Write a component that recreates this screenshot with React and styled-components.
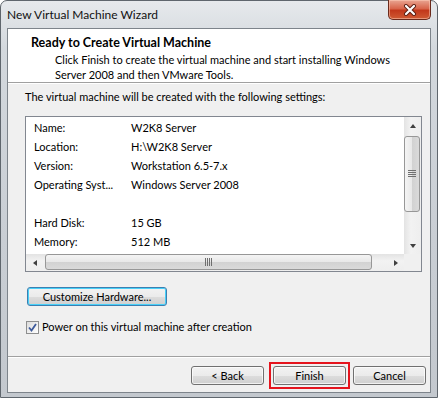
import React from "react";
import styled, { createGlobalStyle } from "styled-components";

const GlobalStyle = createGlobalStyle`
  html, body {
    margin: 0;
    padding: 0;
    background: #ffffff;
  }
  body {
    font-family: Lato, "Noto Sans", sans-serif;
    font-size: 11px;
    color: #000;
  }
`;

const settings = [
  ["Name:", "W2K8 Server"],
  ["Location:", "H:\\W2K8 Server"],
  ["Version:", "Workstation 6.5-7.x"],
  ["Operating Syst...", "Windows Server 2008"],
  null,
  ["Hard Disk:", "15 GB"],
  ["Memory:", "512 MB"],
];

const Frame = styled.div`
  width: 438px;
  height: 398px;
  box-sizing: border-box;
  display: flex;
  flex-direction: column;
  border: 1px solid #5f666d;
  border-radius: 7px 7px 0 0;
  padding: 0 6px 4px 6px;
  background: linear-gradient(180deg, #e6e9ec 0%, #d3d8dd 12%, #c9ced4 60%, #c3c8ce 100%);
`;

const TitleBar = styled.div`
  height: 27px;
  display: flex;
  align-items: flex-start;
  justify-content: space-between;
`;

const Title = styled.div`
  font-size: 12px;
  line-height: 16px;
  margin-top: 6px;
  color: #111;
`;

const CloseButton = styled.div`
  width: 43px;
  height: 20px;
  margin-top: -1px;
  box-sizing: border-box;
  border: 1px solid #6a2a1c;
  border-top: none;
  border-radius: 0 0 5px 5px;
  background: linear-gradient(180deg, #e9a592 0%, #d8654b 45%, #c2381b 55%, #cf5a33 100%);
  box-shadow: inset 0 0 0 1px rgba(255, 210, 190, 0.5);
  display: flex;
  align-items: center;
  justify-content: center;
`;

const Client = styled.div`
  flex: 1;
  display: flex;
  flex-direction: column;
  border: 1px solid #7d848b;
  background: #f0f0f0;
`;

const Header = styled.div`
  background: #ffffff;
  padding: 6px 0 0 23px;
  border-bottom: 1px solid #a0a0a0;
  box-shadow: 0 1px 0 #ffffff;
`;

const HeaderTitle = styled.div`
  font-weight: bold;
  font-size: 12.5px;
  line-height: 16px;
`;

const HeaderText = styled.div`
  margin-top: 1px;
  padding-left: 24px;
  line-height: 15px;
  width: 340px;
`;

const Body = styled.div`
  flex: 1;
  display: flex;
  flex-direction: column;
  padding: 0 9px 0 17px;
`;

const Intro = styled.div`
  margin-top: 6px;
  line-height: 16px;
`;

const ListBox = styled.div`
  margin-top: 11px;
  width: 397px;
  height: 156px;
  box-sizing: border-box;
  border: 1px solid #828790;
  background: #fff;
  display: grid;
  grid-template-columns: 1fr 17px;
  grid-template-rows: 1fr 17px;
`;

const Rows = styled.div`
  padding: 1px 0 0 8px;
  overflow: hidden;
`;

const Row = styled.div`
  display: flex;
  height: 19px;
  align-items: center;
  white-space: nowrap;
`;

const Label = styled.span`
  width: 97px;
  flex: none;
`;

const VScroll = styled.div`
  display: flex;
  flex-direction: column;
  background: linear-gradient(90deg, #e3e3e3, #f2f2f2 40%, #eeeeee);
`;

const HScroll = styled.div`
  display: flex;
  background: linear-gradient(180deg, #e3e3e3, #f2f2f2 40%, #eeeeee);
`;

const Arrow = styled.div`
  width: 17px;
  height: 17px;
  flex: none;
  display: flex;
  align-items: center;
  justify-content: center;
`;

const Track = styled.div`
  flex: 1;
  display: flex;
  flex-direction: ${(p) => (p.$vertical ? "column" : "row")};
`;

const Thumb = styled.div`
  box-sizing: border-box;
  border: 1px solid #979797;
  border-radius: 3px;
  display: flex;
  align-items: center;
  justify-content: center;
  ${(p) =>
    p.$vertical
      ? `
    margin: 2px 1px 0 0;
    width: 16px;
    height: 76px;
    background: linear-gradient(90deg, #f4f4f4 0%, #e8e8e8 50%, #d2d2d2 51%, #dadada 100%);
  `
      : `
    margin: 0 0 1px 2px;
    height: 16px;
    width: 327px;
    background: linear-gradient(180deg, #f4f4f4 0%, #e8e8e8 50%, #d2d2d2 51%, #dadada 100%);
  `}
`;

const Corner = styled.div`
  background: #f0f0f0;
`;

const Button = styled.button`
  font-family: Lato, "Noto Sans", sans-serif;
  font-size: 11px;
  color: #000;
  height: 19px;
  width: ${(p) => p.$width || 73}px;
  padding: 0;
  box-sizing: border-box;
  border: 1px solid ${(p) => (p.$focused ? "#3c7fb1" : "#707070")};
  border-radius: 3px;
  background: linear-gradient(180deg, #f2f2f2 0%, #ebebeb 50%, #dddddd 51%, #cfcfcf 100%);
  box-shadow: inset 0 0 0 1px ${(p) => (p.$focused ? "#48d0f8" : "rgba(255,255,255,0.7)")};
  line-height: 16px;
`;

const Marker = styled.span`
  display: flex;
  padding: 2px;
  margin: -4px -6px 0 -4px;
  border: 2px solid #e5141d;
`;

const CustomizeRow = styled.div`
  margin-top: 15px;
  padding-left: 2px;
`;

const CheckRow = styled.label`
  margin-top: 14px;
  display: flex;
  align-items: center;
  gap: 3px;
  padding-left: 1px;
  line-height: 14px;
`;

const Box = styled.span`
  width: 13px;
  height: 13px;
  box-sizing: border-box;
  border: 1px solid #8e8f8f;
  background: linear-gradient(135deg, #dcdcdc, #ffffff);
  display: flex;
  align-items: center;
  justify-content: center;
`;

const Separator = styled.div`
  border-top: 1px solid #a0a0a0;
  border-bottom: 1px solid #ffffff;
`;

const Footer = styled.div`
  height: 34px;
  box-sizing: border-box;
  padding: 8px 4px 0 0;
  display: flex;
  align-items: flex-start;
  justify-content: flex-end;
  gap: 9px;
`;

const Tri = ({ dir }) => {
  const pts = {
    up: "1,5 4,1 7,5",
    down: "1,1 4,5 7,1",
    left: "5,1 1,4 5,7",
    right: "1,1 5,4 1,7",
  }[dir];
  const vertical = dir === "up" || dir === "down";
  return (
    <svg width={vertical ? 8 : 6} height={vertical ? 6 : 8} viewBox={vertical ? "0 0 8 6" : "0 0 6 8"}>
      <polygon points={pts} fill="#404040" />
    </svg>
  );
};

const Grip = ({ vertical }) =>
  vertical ? (
    <svg width="8" height="8" viewBox="0 0 8 8">
      {[0, 2, 4, 6].map((y) => (
        <line key={y} x1="0" y1={y + 0.5} x2="8" y2={y + 0.5} stroke="#6f6f6f" />
      ))}
    </svg>
  ) : (
    <svg width="8" height="8" viewBox="0 0 8 8">
      {[0, 2, 4, 6].map((x) => (
        <line key={x} x1={x + 0.5} y1="0" x2={x + 0.5} y2="8" stroke="#6f6f6f" />
      ))}
    </svg>
  );

const App = () => (
  <>
    <GlobalStyle />
    <Frame>
      <TitleBar>
        <Title>New Virtual Machine Wizard</Title>
        <CloseButton>
          <svg width="14" height="12" viewBox="0 0 14 12">
            <path d="M3 2 L11 10 M11 2 L3 10" stroke="#5a1e12" strokeWidth="4" strokeLinecap="round" />
            <path d="M3 2 L11 10 M11 2 L3 10" stroke="#ffffff" strokeWidth="2.2" strokeLinecap="round" />
          </svg>
        </CloseButton>
      </TitleBar>
      <Client>
        <Header>
          <HeaderTitle>Ready to Create Virtual Machine</HeaderTitle>
          <HeaderText>
            Click Finish to create the virtual machine and start installing Windows Server 2008 and then
            VMware Tools.
          </HeaderText>
        </Header>
        <Body>
          <Intro>The virtual machine will be created with the following settings:</Intro>
          <ListBox>
            <Rows>
              {settings.map((s, i) =>
                s ? (
                  <Row key={i}>
                    <Label>{s[0]}</Label>
                    <span>{s[1]}</span>
                  </Row>
                ) : (
                  <Row key={i} />
                )
              )}
            </Rows>
            <VScroll>
              <Arrow>
                <Tri dir="up" />
              </Arrow>
              <Track $vertical>
                <Thumb $vertical>
                  <Grip vertical />
                </Thumb>
              </Track>
              <Arrow>
                <Tri dir="down" />
              </Arrow>
            </VScroll>
            <HScroll>
              <Arrow>
                <Tri dir="left" />
              </Arrow>
              <Track>
                <Thumb>
                  <Grip />
                </Thumb>
              </Track>
              <Arrow>
                <Tri dir="right" />
              </Arrow>
            </HScroll>
            <Corner />
          </ListBox>
          <CustomizeRow>
            <Button $width={140} $focused>
              Customize Hardware...
            </Button>
          </CustomizeRow>
          <CheckRow>
            <Box>
              <svg width="9" height="9" viewBox="0 0 9 9">
                <path d="M1 4.5 L3.5 7.5 L8 1" stroke="#3d5a9b" strokeWidth="1.8" fill="none" />
              </svg>
            </Box>
            <span>Power on this virtual machine after creation</span>
          </CheckRow>
        </Body>
        <Separator />
        <Footer>
          <Button>&lt; Back</Button>
          <Marker>
            <Button>Finish</Button>
          </Marker>
          <Button>Cancel</Button>
        </Footer>
      </Client>
    </Frame>
  </>
);

export default App;
